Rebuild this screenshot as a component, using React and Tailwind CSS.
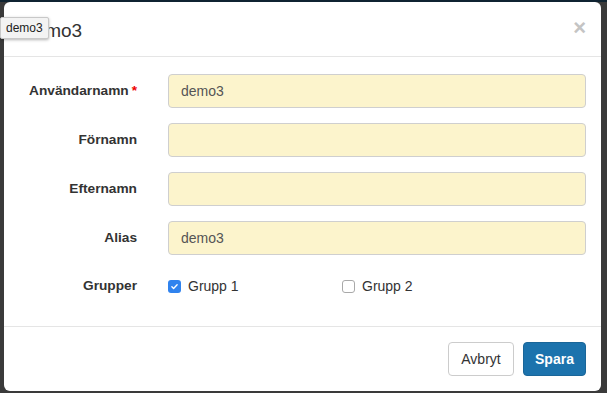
import React from "react";

const fields = [
  { label: "Användarnamn", value: "demo3", required: true },
  { label: "Förnamn", value: "" },
  { label: "Efternamn", value: "" },
  { label: "Alias", value: "demo3" },
];

const Checkbox = ({ checked }) =>
  checked ? (
    <span className="flex h-[13px] w-[13px] items-center justify-center rounded-[3px] bg-[#3083ee]">
      <svg viewBox="0 0 12 12" className="h-[9px] w-[9px]" fill="none" stroke="white" strokeWidth="1.8" strokeLinecap="round" strokeLinejoin="round">
        <path d="M2.5 6.3l2.3 2.3 4.7-5" />
      </svg>
    </span>
  ) : (
    <span className="h-[13px] w-[13px] rounded-[3px] border border-[#a9a9a9] bg-white" />
  );

const App = () => {
  return (
    <div
      className="relative h-[393px] w-[607px] overflow-hidden border-t-2 border-[#0f2331] bg-[#3a3a3a] pl-[4px]"
      style={{ fontFamily: '"Helvetica Neue", "Liberation Sans", Arial, sans-serif' }}
    >
      <div className="flex h-[389px] w-[597px] flex-col rounded-[6px] bg-white text-[#333]">
        {/* header */}
        <div className="flex h-[55px] items-center justify-between border-b border-[#e5e5e5] pl-[20px] pr-[15px]">
          <h4 className="mt-[2px] text-[19px] leading-none font-medium">demo3</h4>
          <span className="-mt-[2px] text-[22px] leading-none font-bold text-[#c4c4c4]">×</span>
        </div>

        {/* body */}
        <div className="flex flex-1 flex-col px-[15px] pt-[17px]">
          {fields.map((f) => (
            <div key={f.label} className="mb-[15px] flex items-center">
              <label className="w-[119px] pr-[1px] text-right text-[13.7px] font-bold">
                {f.label}
                {f.required && <span className="ml-[3px] text-[#e00]">*</span>}
              </label>
              <div className="ml-[30px] flex h-[34px] flex-1 items-center rounded-[4px] border border-[#cfcfcf] bg-[#fcf4cc] px-[12px] text-[14px] text-[#555]">
                {f.value}
              </div>
            </div>
          ))}
          <div className="mt-[6px] flex items-center">
            <label className="w-[119px] pr-[1px] text-right text-[13.7px] font-bold">Grupper</label>
            <div className="ml-[30px] flex items-center text-[14px]">
              <div className="flex w-[174px] items-center gap-[7px]">
                <Checkbox checked />
                <span>Grupp 1</span>
              </div>
              <div className="flex items-center gap-[7px]">
                <Checkbox />
                <span>Grupp 2</span>
              </div>
            </div>
          </div>
        </div>

        {/* footer */}
        <div className="flex h-[65px] items-center justify-end gap-[9px] border-t border-[#e5e5e5] px-[15px]">
          <button type="button" className="h-[34px] w-[66px] rounded-[4px] border border-[#ccc] bg-white text-[14px] text-[#333]">
            Avbryt
          </button>
          <button type="button" className="h-[34px] w-[63px] rounded-[4px] border border-[#1a6699] bg-[#1c73ad] text-[14px] font-bold text-white">
            Spara
          </button>
        </div>
      </div>

      {/* tooltip */}
      <div className="absolute top-[15px] left-0 rounded-[2px] border border-[#c8c8c8] bg-[#f3f3f3] px-[5px] py-[3px] text-[12px] leading-[14px] text-[#222] shadow-[0_1px_3px_rgba(0,0,0,0.3)]">
        demo3
      </div>
    </div>
  );
};

export default App;
